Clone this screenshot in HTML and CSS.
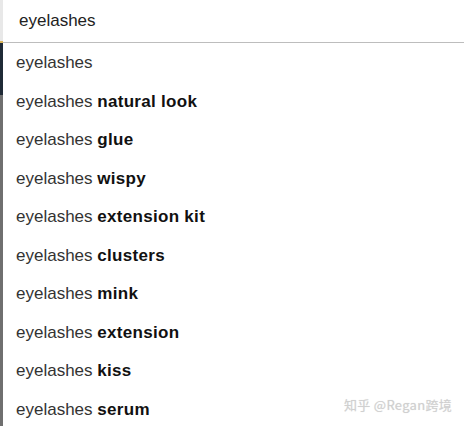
FILE: index.html
```html
<!DOCTYPE html>
<html lang="en">
<head>
    <meta charset="UTF-8">
    <meta name="viewport" content="width=device-width, initial-scale=1.0">
    <title>eyelashes</title>
    <link rel="stylesheet" href="styles.css">
</head>
<body>
    <div class="page">
        <div class="edge"></div>
        <div class="search">
            <div class="search-box">eyelashes</div>
            <ul class="suggestions">
                <li>eyelashes</li>
                <li>eyelashes <b>natural look</b></li>
                <li>eyelashes <b>glue</b></li>
                <li>eyelashes <b>wispy</b></li>
                <li>eyelashes <b>extension kit</b></li>
                <li>eyelashes <b>clusters</b></li>
                <li>eyelashes <b>mink</b></li>
                <li>eyelashes <b>extension</b></li>
                <li>eyelashes <b>kiss</b></li>
                <li>eyelashes <b>serum</b></li>
            </ul>
        </div>
        <div class="watermark">知乎 @Regan跨境</div>
    </div>
</body>
</html>
```

FILE: styles.css
```css
body {
    margin: 0;
    background: white;
    font-family: "Liberation Sans", Arial, sans-serif;
}
.page {
    position: relative;
    display: flex;
    width: 464px;
    height: 426px;
    overflow: hidden;
}
.edge {
    width: 3px;
    flex-shrink: 0;
    background: linear-gradient(to bottom, #e8e8e8 0, #e8e8e8 41px, #d9b45a 41px, #d9b45a 43px, #1f2a36 43px, #1f2a36 95px, #6f6f6f 95px, #6f6f6f 100%);
}
.search {
    flex: 1;
}
.search-box {
    height: 42px;
    line-height: 42px;
    padding-left: 16px;
    font-size: 17px;
    color: #222;
    border-bottom: 1px solid #bdbdbd;
}
.suggestions {
    list-style: none;
    margin: 0;
    padding: 0;
}
.suggestions li {
    height: 38.5px;
    line-height: 39px;
    padding-left: 13px;
    font-size: 17px;
    color: #333;
}
.suggestions b {
    color: #111;
    letter-spacing: 0.3px;
}
.watermark {
    position: absolute;
    right: 12px;
    bottom: 12px;
    font-family: "Noto Sans CJK SC", sans-serif;
    font-size: 13px;
    color: #d0d0d0;
    letter-spacing: 0.3px;
    text-shadow: 0 0 1px rgba(0, 0, 0, 0.12);
}
```
